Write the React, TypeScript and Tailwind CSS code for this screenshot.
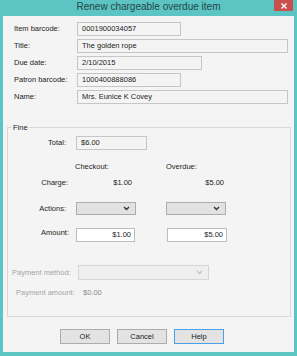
const font = { fontFamily: '"Liberation Sans", Arial, sans-serif' }

function Chevron({ muted = false }: { muted?: boolean }) {
  return (
    <svg width="7" height="5" viewBox="0 0 7 5" className="ml-auto mr-[5px]">
      <polyline
        points="1,1 3.5,3.5 6,1"
        fill="none"
        stroke={muted ? '#c4c4c4' : '#333333'}
        strokeWidth="1.4"
      />
    </svg>
  )
}

function ReadField({ value, width }: { value: string; width: string }) {
  return (
    <div
      className={`${width} h-[14px] border border-[#c6c6c6] bg-[#f4f4f4] flex items-center pl-[4px] text-[#222]`}
    >
      {value}
    </div>
  )
}

const topRows = [
  { label: 'Item barcode:', value: '0001900034057', width: 'w-[104px]' },
  { label: 'Title:', value: 'The golden rope', width: 'w-[211px]' },
  { label: 'Due date:', value: '2/10/2015', width: 'w-[125px]' },
  { label: 'Patron barcode:', value: '1000400888086', width: 'w-[104px]' },
  { label: 'Name:', value: 'Mrs. Eunice K Covey', width: 'w-[211px]' },
]

export default function App() {
  return (
    <div className="w-[297px] h-[356px] bg-[#5cc4c2] flex flex-col text-[7.5px] text-[#1c1c1c]" style={font}>
      {/* Title bar */}
      <div className="h-[16px] flex items-start relative shrink-0">
        <div className="flex-1 text-center text-[10px] leading-[14px] text-[#254646]">
          Renew chargeable overdue item
        </div>
        <div className="absolute right-[4px] top-0 w-[19px] h-[11px] bg-[#c9504d] flex items-center justify-center">
          <svg width="6" height="6" viewBox="0 0 6 6">
            <path d="M0.5 0.5 L5.5 5.5 M5.5 0.5 L0.5 5.5" stroke="#fff" strokeWidth="1.3" />
          </svg>
        </div>
      </div>

      {/* Body */}
      <div className="flex-1 mx-[3px] mb-[4px] bg-[#f4f4f4] flex flex-col">
        {/* Item details */}
        <div className="flex flex-col gap-[3px] pt-[6px] pl-[11px]">
          {topRows.map((row) => (
            <div key={row.label} className="flex items-center h-[14px]">
              <div className="w-[63px]">{row.label}</div>
              <ReadField value={row.value} width={row.width} />
            </div>
          ))}
        </div>

        {/* Fine group */}
        <div className="relative mt-[23px] ml-[4px] w-[284px] border border-[#d9d9d9] flex flex-col pb-[17px]">
          <div className="absolute -top-[5px] left-[4px] px-[1px] bg-[#f4f4f4] leading-[9px]">Fine</div>

          <div className="flex items-center h-[14px] mt-[8px]">
            <div className="w-[58px] text-right">Total:</div>
            <div className="ml-[10px] w-[71px] h-[14px] border border-[#c6c6c6] bg-[#f4f4f4] flex items-center pl-[4px]">
              $6.00
            </div>
          </div>

          <div className="flex items-center h-[12px] mt-[11px]">
            <div className="ml-[67px] w-[91px]">Checkout:</div>
            <div>Overdue:</div>
          </div>

          <div className="flex items-center h-[12px] mt-[4px]">
            <div className="w-[60px] text-right">Charge:</div>
            <div className="ml-[8px] w-[56px] text-right">$1.00</div>
            <div className="ml-[36px] w-[56px] text-right">$5.00</div>
          </div>

          <div className="flex items-center h-[13px] mt-[13px]">
            <div className="w-[58px] text-right">Actions:</div>
            <div className="ml-[10px] w-[60px] h-[13px] border border-[#acacac] bg-[#e2e2e2] flex items-center">
              <Chevron />
            </div>
            <div className="ml-[30px] w-[60px] h-[13px] border border-[#acacac] bg-[#e2e2e2] flex items-center">
              <Chevron />
            </div>
          </div>

          <div className="flex items-start h-[14px] mt-[13px]">
            <div className="w-[61px] text-right leading-[10px]">Amount:</div>
            <div className="ml-[7px] w-[59px] h-[14px] border border-[#bdbdbd] bg-white flex items-center justify-end pr-[3px]">
              $1.00
            </div>
            <div className="ml-[32px] w-[60px] h-[14px] border border-[#bdbdbd] bg-white flex items-center justify-end pr-[3px]">
              $5.00
            </div>
          </div>

          <div className="flex items-center h-[15px] mt-[23px] text-[#a4a4a4]">
            <div className="ml-[4px] w-[66px]">Payment method:</div>
            <div className="w-[131px] h-[15px] border border-[#d6d6d6] bg-[#efefef] flex items-center">
              <Chevron muted />
            </div>
          </div>

          <div className="flex items-center h-[12px] mt-[7px] text-[#a4a4a4]">
            <div className="ml-[8px] w-[67px]">Payment amount:</div>
            <div className="text-[#8a8a8a]">$0.00</div>
          </div>
        </div>

        {/* Buttons */}
        <div className="flex gap-[7px] mt-[12px] ml-[57px]">
          <button className="w-[50px] h-[15px] border border-[#acacac] bg-[#e3e3e3] flex items-center justify-center">
            OK
          </button>
          <button className="w-[50px] h-[15px] border border-[#acacac] bg-[#e3e3e3] flex items-center justify-center">
            Cancel
          </button>
          <button className="w-[50px] h-[15px] border border-[#4a9fe6] bg-[#e3e3e3] flex items-center justify-center">
            Help
          </button>
        </div>
      </div>
    </div>
  )
}
